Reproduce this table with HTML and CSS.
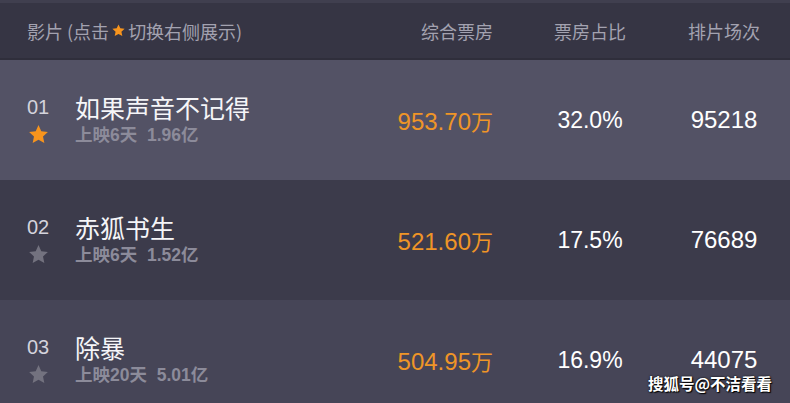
FILE: index.html
```html
<!DOCTYPE html>
<html lang="zh">
<head>
<meta charset="utf-8">
<link rel="stylesheet" href="styles.css">
</head>
<body>
<div class="board">
  <div class="head">
    <div class="h-film">影片 (点击<svg class="hstar" viewBox="0 0 24 24"><path d="M12 2.2l2.9 6.3 6.9.8-5.1 4.7 1.4 6.8L12 17.4l-6.1 3.4 1.4-6.8-5.1-4.7 6.9-.8z" fill="#f7941d"/></svg>切换右侧展示)</div>
    <div class="h-col c1">综合票房</div>
    <div class="h-col c2">票房占比</div>
    <div class="h-col c3">排片场次</div>
  </div>

  <div class="row r1">
    <div class="film">
      <div class="rank">
        <span class="num">01</span>
        <svg class="star" viewBox="0 0 24 24"><path d="M12 2.2l2.9 6.3 6.9.8-5.1 4.7 1.4 6.8L12 17.4l-6.1 3.4 1.4-6.8-5.1-4.7 6.9-.8z" fill="#f7941d"/></svg>
      </div>
      <div class="info">
        <div class="title">如果声音不记得</div>
        <div class="sub">上映6天&nbsp; 1.96亿</div>
      </div>
    </div>
    <div class="val c1 box">953.70<span class="unit">万</span></div>
    <div class="val c2">32.0%</div>
    <div class="val c3">95218</div>
  </div>

  <div class="row r2">
    <div class="film">
      <div class="rank">
        <span class="num">02</span>
        <svg class="star" viewBox="0 0 24 24"><path d="M12 2.2l2.9 6.3 6.9.8-5.1 4.7 1.4 6.8L12 17.4l-6.1 3.4 1.4-6.8-5.1-4.7 6.9-.8z" fill="#73727f"/></svg>
      </div>
      <div class="info">
        <div class="title">赤狐书生</div>
        <div class="sub">上映6天&nbsp; 1.52亿</div>
      </div>
    </div>
    <div class="val c1 box">521.60<span class="unit">万</span></div>
    <div class="val c2">17.5%</div>
    <div class="val c3">76689</div>
  </div>

  <div class="row r3">
    <div class="film">
      <div class="rank">
        <span class="num">03</span>
        <svg class="star" viewBox="0 0 24 24"><path d="M12 2.2l2.9 6.3 6.9.8-5.1 4.7 1.4 6.8L12 17.4l-6.1 3.4 1.4-6.8-5.1-4.7 6.9-.8z" fill="#73727f"/></svg>
      </div>
      <div class="info">
        <div class="title">除暴</div>
        <div class="sub">上映20天&nbsp; 5.01亿</div>
      </div>
    </div>
    <div class="val c1 box">504.95<span class="unit">万</span></div>
    <div class="val c2">16.9%</div>
    <div class="val c3">44075</div>
  </div>

  <div class="mark">搜狐号@不洁看看</div>
</div>
</body>
</html>
```
FILE: styles.css
```css
html, body {
  margin: 0;
  padding: 0;
  background: #454456;
}
body {
  width: 790px;
  height: 403px;
  overflow: hidden;
  font-family: "Liberation Sans", "Noto Sans CJK SC", sans-serif;
}
.board {
  position: relative;
  width: 790px;
  height: 403px;
  overflow: hidden;
}
.head {
  display: grid;
  grid-template-columns: 1fr 142px 136px 132px;
  align-items: center;
  height: 55px;
  background: #363544;
  border-top: 3px solid #403f4f;
  border-bottom: 2px solid #2f2e3b;
  color: #a3a2b0;
  font-family: "Noto Sans CJK SC", sans-serif;
  font-size: 18px;
}
.h-film {
  padding-left: 27px;
  display: flex;
  align-items: center;
}
.hstar {
  width: 15px;
  height: 15px;
  margin: 0 2px 0 2px;
}
.h-col.c1 { text-align: right; padding-right: 29px; }
.h-col.c2, .h-col.c3 { text-align: center; }
.row {
  display: grid;
  grid-template-columns: 1fr 142px 136px 132px;
  align-items: center;
  height: 120px;
}
.r1 { background: #535265; }
.r2 { background: #3c3b4b; }
.r3 { background: #464557; }
.film {
  display: flex;
  padding-left: 27px;
}
.rank {
  width: 48px;
  display: flex;
  flex-direction: column;
  align-items: flex-start;
}
.num {
  font-size: 20px;
  color: #d4d3dc;
  line-height: 26px;
}
.star {
  width: 23px;
  height: 23px;
  margin-top: 3px;
}
.info {
  display: flex;
  flex-direction: column;
}
.title {
  font-family: "Noto Sans CJK SC", sans-serif;
  font-size: 25px;
  color: #f5f5f8;
  line-height: 30px;
  margin-top: -2px;
}
.sub {
  font-size: 17.5px;
  font-weight: bold;
  color: #8c8b9a;
  line-height: 22px;
  margin-top: 2px;
}
.val {
  font-size: 23px;
  color: #ffffff;
}
.val.c1 { text-align: right; padding-right: 29px; }
.val.c2, .val.c3 { text-align: center; }
.val.c3 { font-size: 24px; }
.box { color: #ef9527; font-size: 24px; }
.unit {
  font-family: "Noto Sans CJK SC", sans-serif;
  font-size: 22px;
}
.mark {
  position: absolute;
  left: 648px;
  top: 373px;
  font-family: "Noto Sans CJK SC", sans-serif;
  font-weight: bold;
  font-size: 15.5px;
  line-height: 20px;
  color: #ffffff;
  text-shadow: 1px 1px 1px #000, 0 0 2px #000;
}
```
